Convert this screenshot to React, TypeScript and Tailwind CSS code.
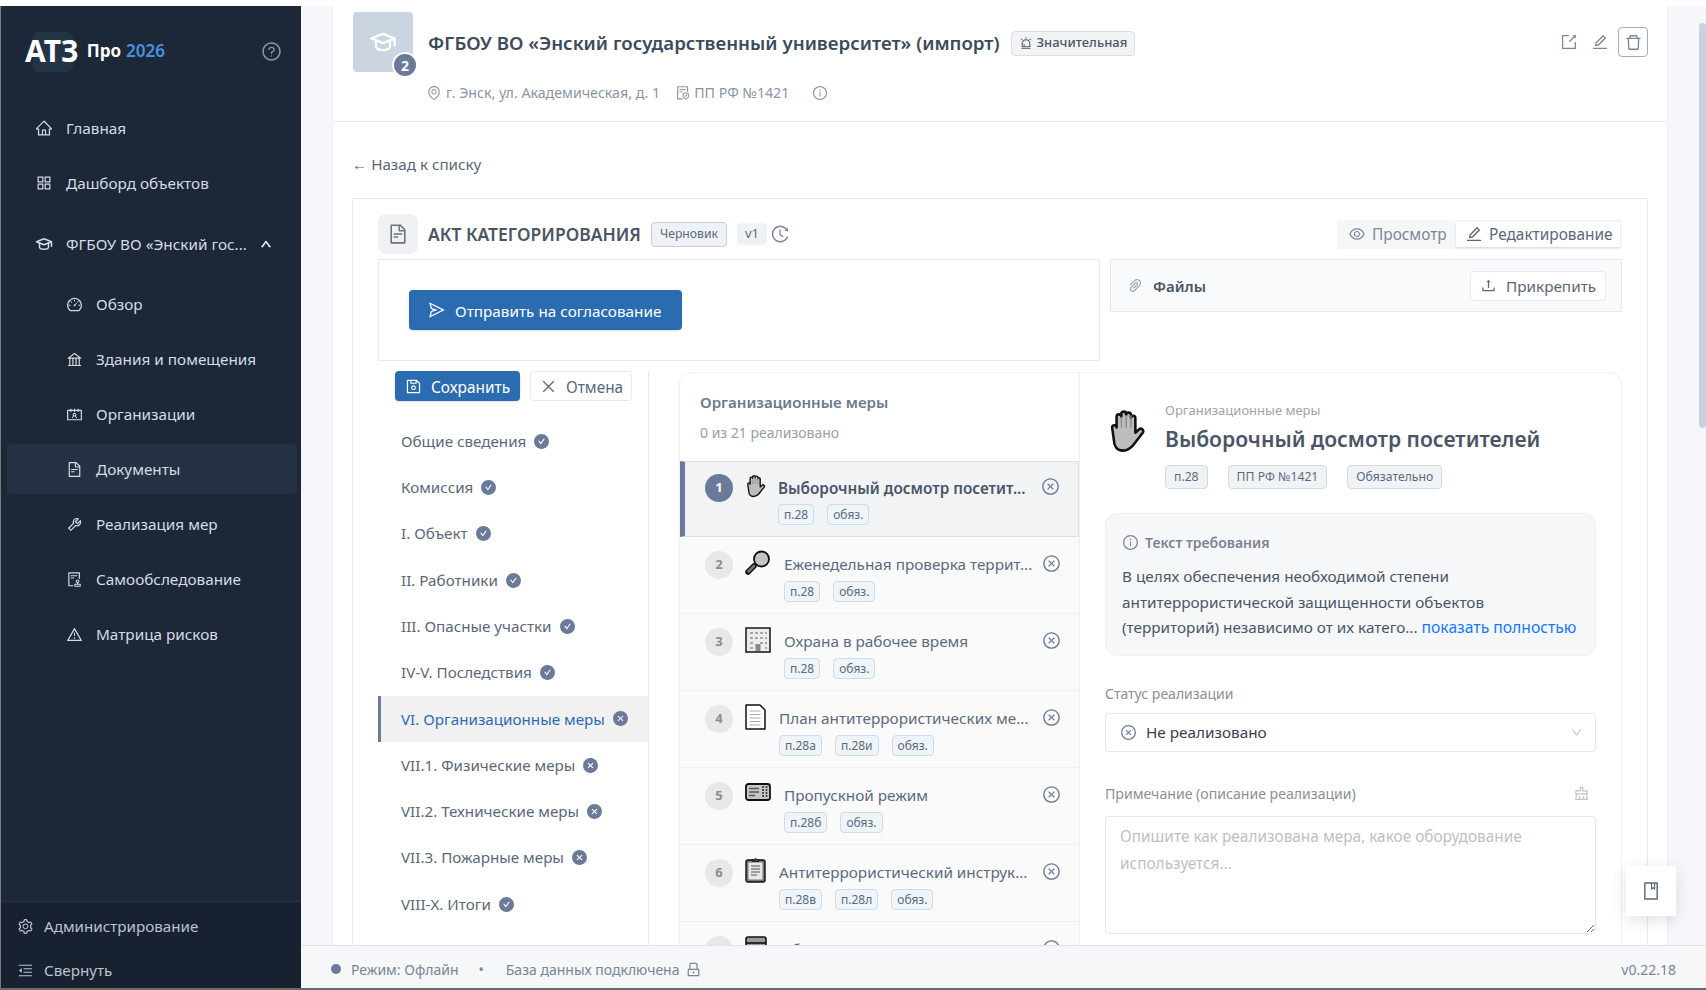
import React from 'react';
import {
  AiOutlineHome, AiOutlineAppstore, AiOutlineDashboard, AiOutlineBank, AiOutlineContacts, AiOutlineFileText,
  AiOutlineTool, AiOutlineAudit, AiOutlineWarning, AiOutlineSetting, AiOutlineMenuFold, AiOutlineQuestionCircle,
  AiOutlineUp, AiOutlineEnvironment, AiOutlineFileProtect, AiOutlineInfoCircle, AiOutlineAlert, AiOutlineExport,
  AiOutlineEdit, AiOutlineDelete, AiOutlineEye, AiOutlineHistory, AiOutlinePaperClip, AiOutlineUpload, AiOutlineSend,
  AiOutlineSave, AiOutlineClose, AiOutlineCloseCircle, AiFillCheckCircle, AiFillCloseCircle, AiOutlineDown,
  AiOutlineClear, AiOutlineBook, AiOutlineLock,
} from 'react-icons/ai';
import { TbSchool } from 'react-icons/tb';

const subNav = [
  { label: 'Обзор', icon: AiOutlineDashboard },
  { label: 'Здания и помещения', icon: AiOutlineBank },
  { label: 'Организации', icon: AiOutlineContacts },
  { label: 'Документы', icon: AiOutlineFileText, active: true },
  { label: 'Реализация мер', icon: AiOutlineTool },
  { label: 'Самообследование', icon: AiOutlineAudit },
  { label: 'Матрица рисков', icon: AiOutlineWarning },
];

const sections = [
  { label: 'Общие сведения', done: true },
  { label: 'Комиссия', done: true },
  { label: 'I. Объект', done: true },
  { label: 'II. Работники', done: true },
  { label: 'III. Опасные участки', done: true },
  { label: 'IV-V. Последствия', done: true },
  { label: 'VI. Организационные меры', done: false, active: true },
  { label: 'VII.1. Физические меры', done: false },
  { label: 'VII.2. Технические меры', done: false },
  { label: 'VII.3. Пожарные меры', done: false },
  { label: 'VIII-X. Итоги', done: true },
];

// emoji in the reference are greyscale, so they are redrawn here
const HandIcon = ({ className }: { className?: string }) => (
  <svg viewBox="0 0 24 26" className={className}>
    <path
      d="M3 11c0-1.8 2.6-1.8 2.6 0V4.6c0-1.8 2.8-1.8 2.8 0V3c0-1.8 2.8-1.8 2.8 0v.6c0-1.8 2.8-1.8 2.8 0v1.6c0-1.6 2.6-1.6 2.6.2V14l2-1.8c1.5-1.4 3.6.5 2.2 2l-5.400 7c-1.500 1.900-3.200 3.300-6 3.300-3.700 0-5.400-2.900-5.400-6.500z"
      fill="#bdbdbd"
      stroke="#111"
      strokeWidth="1.500"
      strokeLinejoin="round"
    />
    <path d="M8.400 4.600V11M11.200 3.600V11M14 3.800V11" stroke="#8a8a8a" strokeWidth="0.800" fill="none" />
  </svg>
);

const LensIcon = ({ className }: { className?: string }) => (
  <svg viewBox="0 0 26 26" className={className}>
    <path d="M9 16L3 22" stroke="#111" strokeWidth="5.500" strokeLinecap="round" />
    <path d="M9 16L3.500 21.500" stroke="#777" strokeWidth="2.500" strokeLinecap="round" />
    <circle cx="16.500" cy="9" r="7.500" fill="#c4c4c4" stroke="#111" strokeWidth="1.800" />
  </svg>
);

const BuildingIcon = ({ className }: { className?: string }) => (
  <svg viewBox="0 0 26 26" className={className}>
    <rect x="1" y="1" width="24" height="24" fill="#ececec" stroke="#222" strokeWidth="1.600" />
    <path d="M5 5h3v2H5zM10 5h3v2h-3zM15 5h3v2h-3zM20 5h2v2h-2zM5 10h3v2H5zM10 10h3v2h-3zM15 10h3v2h-3zM20 10h2v2h-2zM5 15h3v2H5zM15 15h3v2h-3zM20 15h2v2h-2zM5 20h3v2H5zM20 20h2v2h-2z" fill="#a8a8a8" />
    <rect x="10.500" y="17" width="5" height="7" fill="#8a8a8a" />
  </svg>
);

const DocIcon = ({ className }: { className?: string }) => (
  <svg viewBox="0 0 21 26" className={className}>
    <path d="M1 1h14l5 5v19H1z" fill="#fff" stroke="#111" strokeWidth="1.500" strokeLinejoin="round" />
    <path d="M4.500 7h11M4.500 10.500h11M4.500 14h11M4.500 17.500h11M4.500 21h11" stroke="#aaa" strokeWidth="1" />
  </svg>
);

const TicketIcon = ({ className }: { className?: string }) => (
  <svg viewBox="0 0 26 18" className={className}>
    <rect x="1" y="1" width="24" height="16" rx="2.500" fill="#c6c6c6" stroke="#111" strokeWidth="1.800" />
    <path d="M4 5.500h10M4 9h10M4 12.500h6" stroke="#555" strokeWidth="1.400" />
    <path d="M18 3v12M21.500 3v12" stroke="#444" strokeWidth="1.800" strokeDasharray="2 1" />
  </svg>
);

const ClipboardIcon = ({ className }: { className?: string }) => (
  <svg viewBox="0 0 21 26" className={className}>
    <rect x="1" y="3" width="19" height="22" rx="2" fill="#777" stroke="#111" strokeWidth="1.400" />
    <rect x="3.500" y="5.500" width="14" height="17" fill="#e8e8e8" />
    <path d="M6 9h9M6 12h9M6 15h9M6 18h6" stroke="#555" strokeWidth="1" />
    <path d="M7 4.500V2.500h2.500a1 1 0 012 0H14v2z" fill="#444" stroke="#111" strokeWidth="0.800" />
  </svg>
);

const BooksIcon = ({ className }: { className?: string }) => (
  <svg viewBox="0 0 22 26" className={className}>
    <rect x="1" y="1" width="20" height="24" rx="2" fill="#999" stroke="#111" strokeWidth="1.600" />
    <path d="M1 7h20" stroke="#111" strokeWidth="1.600" />
  </svg>
);

const measures = [
  { n: 1, title: 'Выборочный досмотр посетит...', tags: ['п.28', 'обяз.'], icon: HandIcon, iconClass: 'w-[22px] h-[26px] ml-[12px] mt-[-1px]', ml: 'ml-[11px]', h: 'h-[76px]' },
  { n: 2, title: 'Еженедельная проверка террит...', tags: ['п.28', 'обяз.'], icon: LensIcon, iconClass: 'w-[26px] h-[26px] ml-[12px] mt-[-1px]', ml: 'ml-[13px]', h: 'h-[77px]' },
  { n: 3, title: 'Охрана в рабочее время', tags: ['п.28', 'обяз.'], icon: BuildingIcon, iconClass: 'w-[26px] h-[26px] ml-[12px] mt-[-1px]', ml: 'ml-[13px]', h: 'h-[77px]' },
  { n: 4, title: 'План антитеррористических ме...', tags: ['п.28а', 'п.28и', 'обяз.'], icon: DocIcon, iconClass: 'w-[21px] h-[26px] ml-[12px] mt-[-1px]', ml: 'ml-[13px]', h: 'h-[77px]' },
  { n: 5, title: 'Пропускной режим', tags: ['п.28б', 'обяз.'], icon: TicketIcon, iconClass: 'w-[26px] h-[18px] ml-[12px] mt-[1px]', ml: 'ml-[13px]', h: 'h-[77px]' },
  { n: 6, title: 'Антитеррористический инструк...', tags: ['п.28в', 'п.28л', 'обяз.'], icon: ClipboardIcon, iconClass: 'w-[21px] h-[26px] ml-[12px] mt-[-2px]', ml: 'ml-[13px]', h: 'h-[77px]' },
  { n: 7, title: 'Обучение персонала', tags: [], icon: BooksIcon, iconClass: 'w-[22px] h-[26px] ml-[12px]', ml: 'ml-[13px]', h: 'h-[77px]' },
];

const Sidebar: React.FC = () => (
  <aside className="w-[301px] shrink-0 border-l border-[#7a7a7a] flex flex-col bg-[#1c2737] text-[#d6dbe2] text-[15.300px]">
    <div className="h-[90px] mb-[7px] pl-[24px] pr-[19px] flex items-center">
      <div className="relative flex items-center">
        <div className="absolute left-[8px] top-[-4px] w-[40px] h-[40px] rounded-md bg-[#243447]" />
        <span className="relative text-[30px] font-bold text-white leading-none">АТЗ</span>
      </div>
      <span className="ml-[8px] text-[17px] font-bold text-white">Про</span>
      <span className="ml-[5px] text-[17px] font-semibold text-[#4a90e2]">2026</span>
      <AiOutlineQuestionCircle className="ml-auto text-[21px] text-[#8b95a3]" />
    </div>
    <a className="h-[50px] ml-[6px] w-[290px] pl-[28px] flex items-center gap-[13px]">
      <AiOutlineHome className="text-[18px]" />
      <span>Главная</span>
    </a>
    <a className="h-[50px] mt-[5px] ml-[6px] w-[290px] pl-[28px] flex items-center gap-[13px]">
      <AiOutlineAppstore className="text-[18px]" />
      <span>Дашборд объектов</span>
    </a>
    <a className="h-[50px] mt-[11px] ml-[6px] w-[290px] pl-[28px] flex items-center gap-[13px]">
      <TbSchool className="text-[18px]" />
      <span>ФГБОУ ВО «Энский гос...</span>
      <AiOutlineUp className="text-[12px] text-white" strokeWidth={60} />
    </a>
    <div className="mt-[10px] flex flex-col gap-[5px]">
      {subNav.map((item) => {
        const Icon = item.icon;
        return (
          <a
            key={item.label}
            className={`h-[50px] ml-[6px] w-[290px] pl-[59px] flex items-center gap-[13px] rounded ${item.active ? 'bg-[#243244]' : ''}`}
          >
            <Icon className="text-[17px]" />
            <span>{item.label}</span>
          </a>
        );
      })}
    </div>
    <div className="mt-auto border-t border-[#2a3646] bg-[#172130] text-[#bcc3cd] text-[15.200px]">
      <a className="h-[46px] pt-[2px] pl-[16px] flex items-center gap-[10px]">
        <AiOutlineSetting className="text-[17px]" />
        <span>Администрирование</span>
      </a>
      <a className="h-[40px] pt-[4px] pl-[16px] flex items-center gap-[10px]">
        <AiOutlineMenuFold className="text-[17px]" />
        <span>Свернуть</span>
      </a>
    </div>
  </aside>
);

const PageHeader: React.FC = () => (
  <header className="h-[116px] pl-[20px] pr-[19px] pt-[6px] border-b border-[#e6e9ee] flex justify-between">
    <div className="flex">
      <div className="relative w-[60px] h-[60px] rounded bg-[#cbd5e1] flex items-center justify-center">
        <TbSchool className="text-[28px] text-white" />
        <span className="absolute right-[-5px] bottom-[-6px] w-[26px] h-[26px] rounded-full bg-[#6b7a99] border-2 border-white text-white text-[14px] font-bold flex items-center justify-center">
          2
        </span>
      </div>
      <div className="ml-[15px] pt-[16px]">
        <div className="flex items-center h-[30px]">
          <h1 className="text-[18.700px] font-semibold text-[#3d4a5c]">ФГБОУ ВО «Энский государственный университет» (импорт)</h1>
          <span className="ml-[11px] h-[25px] px-[7px] flex items-center gap-[4px] rounded bg-[#f1f3f5] border border-[#d9dee5] text-[13px] font-medium text-[#4a5568]">
            <AiOutlineAlert className="text-[14px]" />
            Значительная
          </span>
        </div>
        <div className="mt-[24px] ml-[-2px] flex items-center text-[14.200px] text-[#8a94a6]">
          <AiOutlineEnvironment className="text-[16px]" />
          <span className="ml-[4px]">г. Энск, ул. Академическая, д. 1</span>
          <AiOutlineFileProtect className="ml-[15px] text-[16px]" />
          <span className="ml-[3px]">ПП РФ №1421</span>
          <AiOutlineInfoCircle className="ml-[23px] text-[16px]" />
        </div>
      </div>
    </div>
    <div className="flex items-center h-[30px] mt-[15px] text-[#7b8798]">
      <AiOutlineExport className="text-[18px] mr-[13px]" />
      <AiOutlineEdit className="text-[18px] mr-[9px]" />
      <button className="w-[30px] h-[30px] border border-[#a3aebd] rounded-sm flex items-center justify-center">
        <AiOutlineDelete className="text-[19px]" />
      </button>
    </div>
  </header>
);

const Tag: React.FC<{ children: React.ReactNode }> = ({ children }) => (
  <span className="h-[21px] px-[5px] flex items-center bg-[#eff4f8] border border-[#cfdbe6] rounded-sm text-[12px] text-[#5a6b7d]">
    {children}
  </span>
);

const MeasureList: React.FC = () => (
  <div className="w-[400px] shrink-0 border-r border-[#eef0f2]">
    <div className="px-[20px] pt-[18px] pb-[18px]">
      <div className="h-[22px] text-[15.100px] font-semibold text-[#6b7a90] leading-[22px]">Организационные меры</div>
      <div className="mt-[10px] h-[20px] text-[14px] text-[#9aa0a8] leading-[20px]">0 из 21 реализовано</div>
    </div>
    {measures.map((m, i) => {
      const Icon = m.icon;
      const selected = i === 0;
      return (
        <div
          key={m.n}
          className={`${m.h} flex ${selected ? 'pt-[12px] bg-[#f1f3f5] border border-[#dcdfe3] border-l-[5px] border-l-[#6b7a99] pl-[20px]' : 'pt-[14px] bg-[#fafafa] border-b border-[#f0f0f0] pl-[25px]'}`}
        >
          <span className={`w-[28px] h-[28px] shrink-0 rounded-full flex items-center justify-center text-[13px] font-bold ${selected ? 'bg-[#6b7a99] text-white' : 'bg-[#e8e8e8] text-[#8c8c8c]'}`}>
            {m.n}
          </span>
          <Icon className={`${m.iconClass} shrink-0`} />
          <div className={`${m.ml} ${selected ? 'pt-[3px]' : 'pt-[2px]'} flex-1 min-w-0`}>
            <div className={`h-[22px] leading-[22px] text-[15.300px] whitespace-nowrap ${selected ? 'font-semibold text-[#4a5568]' : 'text-[#5b6b7f]'}`}>{m.title}</div>
            <div className={`${selected ? 'mt-[5px]' : 'mt-[6px]'} flex gap-[13px]`}>
              {m.tags.map((t) => <Tag key={t}>{t}</Tag>)}
            </div>
          </div>
          <AiOutlineCloseCircle className="text-[19px] text-[#6b7a99] shrink-0 mr-[18px] mt-[3px]" />
        </div>
      );
    })}
  </div>
);

const MeasureDetail: React.FC = () => (
  <div className="flex-1 px-[25px] pt-[28px]">
    <div className="flex pl-[2px]">
      <HandIcon className="w-[41px] h-[48px] mt-[6px] shrink-0" />
      <div className="ml-[17px]">
        <div className="h-[18px] leading-[18px] text-[13px] text-[#9ca3af]">Организационные меры</div>
        <div className="mt-[2px] h-[36px] leading-[36px] text-[21.100px] font-semibold text-[#4a5568] whitespace-nowrap">Выборочный досмотр посетителей</div>
        <div className="mt-[8px] flex gap-[20px] text-[12.200px] text-[#5a6b7d]">
          {['п.28', 'ПП РФ №1421', 'Обязательно'].map((t) => (
            <span key={t} className="h-[24px] px-[8px] flex items-center bg-[#f0f3f6] border border-[#d3dae2] rounded-sm">{t}</span>
          ))}
        </div>
      </div>
    </div>
    <div className="mt-[24px] h-[143px] rounded-xl bg-[#f6f7f9] border border-[#f0f1f3] px-[16px] pt-[18px]">
      <div className="flex items-center gap-[6px] h-[20px] text-[14px] font-semibold text-[#7b8494]">
        <AiOutlineInfoCircle className="text-[17px]" />
        Текст требования
      </div>
      <p className="mt-[12px] text-[15.300px] leading-[25.500px] text-[#4a5568] whitespace-nowrap">
        В целях обеспечения необходимой степени<br />
        антитеррористической защищенности объектов<br />
        (территорий) независимо от их катего... <span className="text-[15.700px] text-[#1677ff]">показать полностью</span>
      </p>
    </div>
    <div className="mt-[28px] h-[20px] leading-[20px] text-[14px] text-[#8a8f98]">Статус реализации</div>
    <div className="mt-[9px] h-[39px] border border-[#e3e6ea] rounded-sm pl-[14px] flex items-center">
      <AiOutlineCloseCircle className="text-[17px] text-[#6b7a99]" />
      <span className="ml-[9px] text-[15.300px] text-[#374151]">Не реализовано</span>
      <AiOutlineDown className="ml-auto mr-[12px] text-[13px] text-[#bfc5cd]" />
    </div>
    <div className="mt-[31px] h-[20px] flex items-center justify-between text-[14.100px] text-[#8a8f98]">
      <span className="pt-[1px]">Примечание (описание реализации)</span>
      <AiOutlineClear className="mr-[6px] text-[17px] text-[#bfc5cd]" />
    </div>
    <textarea
      readOnly
      className="mt-[13px] block w-full h-[118px] border border-[#e3e6ea] rounded-sm px-[14px] py-[6px] text-[15.400px] leading-[27px] placeholder:text-[#bfbfbf]"
      placeholder="Опишите как реализована мера, какое оборудование используется..."
    />
  </div>
);

const ActCard: React.FC = () => (
  <section className="mt-[23px] h-[760px] border border-b-0 border-[#e6e9ee] px-[25px] pt-[15px]">
    <div className="h-[40px] flex items-center">
      <div className="w-[40px] h-[40px] rounded-lg bg-[#f0f1f3] flex items-center justify-center">
        <AiOutlineFileText className="text-[22px] text-[#6b7280]" />
      </div>
      <h2 className="ml-[10px] pt-[1px] text-[17.500px] font-semibold text-[#4b5563]">АКТ КАТЕГОРИРОВАНИЯ</h2>
      <span className="ml-[10px] h-[25px] px-[8px] flex items-center bg-[#eef2f6] border border-[#c5d0dc] rounded-sm text-[12.200px] text-[#5a6b7d]">Черновик</span>
      <span className="ml-[10px] h-[22px] w-[30px] flex items-center justify-center bg-[#eef2f6] rounded-sm text-[13px] text-[#5a6b7d]">v1</span>
      <AiOutlineHistory className="ml-[3px] text-[20px] text-[#7b8798]" />
      <div className="ml-auto mr-[1px] h-[29px] w-[284px] bg-[#f5f6f8] flex items-center pl-[11px] pr-[1px] text-[15.400px]">
        <AiOutlineEye className="text-[18px] text-[#7b8798]" />
        <span className="ml-[6px] pt-[2px] text-[#7b8798]">Просмотр</span>
        <div className="ml-auto h-[25px] w-[164px] bg-white shadow-sm flex items-center pl-[9px] gap-[6px] text-[#5b6778]">
          <AiOutlineEdit className="text-[18px]" />
          <span className="pt-[2px]">Редактирование</span>
        </div>
      </div>
    </div>
    <div className="mt-[5px] flex items-start">
      <div className="w-[722px] h-[102px] border border-[#e6e9ee] pl-[30px] pt-[30px]">
        <button className="w-[273px] h-[40px] bg-[#2b6cb0] rounded-sm shadow-sm text-white text-[15.300px] flex items-center pl-[19px] gap-[9px]">
          <AiOutlineSend className="text-[18px]" />
          <span className="pt-[2px]">Отправить на согласование</span>
        </button>
      </div>
      <div className="ml-[10px] w-[512px] h-[53px] bg-[#f9fafb] border border-[#e6e9ee] flex items-center pl-[16px] pr-[15px]">
        <AiOutlinePaperClip className="text-[17px] text-[#94a3b8]" />
        <span className="ml-[9px] pt-[1px] text-[15px] font-semibold text-[#4b5563]">Файлы</span>
        <button className="ml-auto w-[136px] h-[30px] bg-white border border-[#e6e9ee] rounded-sm text-[15.300px] text-[#5b6778] flex items-center pl-[9px] gap-[9px]">
          <AiOutlineUpload className="text-[17px]" />
          <span className="pt-[1px]">Прикрепить</span>
        </button>
      </div>
    </div>
    <div className="flex">
      <nav className="mt-[10px] w-[271px] shrink-0 border-r border-[#e6e9ee]">
        <div className="pl-[17px] flex gap-[10px]">
          <button className="w-[125px] h-[30px] bg-[#2b6cb0] rounded-sm shadow-sm text-white text-[15.400px] flex items-center pl-[10px] gap-[9px]">
            <AiOutlineSave className="text-[17px]" />
            <span className="pt-[3px]">Сохранить</span>
          </button>
          <button className="w-[102px] h-[30px] bg-white border border-[#e6e9ee] rounded-sm text-[15.400px] text-[#5b6778] flex items-center pl-[9px] gap-[9px]">
            <AiOutlineClose className="text-[17px]" />
            <span className="pt-[3px]">Отмена</span>
          </button>
        </div>
        <div className="mt-[17px]">
          {sections.map((s) => (
            <div
              key={s.label}
              className={`h-[46.300px] flex items-center text-[15.200px] ${s.active ? 'bg-[#f1f1f2] border-l-[3px] border-[#6b7a99] pl-[20px] text-[#2b6cb0]' : 'pl-[23px] text-[#5b6778]'}`}
            >
              <span>{s.label}</span>
              {s.done
                ? <AiFillCheckCircle className="ml-[7px] text-[17px] text-[#6b7a99]" />
                : <AiFillCloseCircle className="ml-[7px] text-[17px] text-[#6b7a99]" />}
            </div>
          ))}
        </div>
      </nav>
      <div className="ml-[30px] mt-[11px] w-[943px] h-[800px] border border-[#f0f1f3] rounded-xl flex overflow-hidden">
        <MeasureList />
        <MeasureDetail />
      </div>
    </div>
  </section>
);

export default function App() {
  return (
    <div className="w-[1706px] h-[990px] overflow-hidden bg-white pt-[6px] font-['Noto_Sans',sans-serif]">
      <div className="h-[982px] flex">
        <Sidebar />
        <main className="relative flex-1 min-w-0 flex flex-col">
          <div className="flex-1 min-h-0 overflow-hidden bg-[#f5f7fa] pl-[31px]">
            <div className="w-[1336px] h-full bg-white border-l border-r border-[#eceff3]">
              <PageHeader />
              <div className="px-[19px] pt-[31px]">
                <a className="block h-[22px] leading-[22px] text-[15.200px] text-[#5a6578]">← Назад к списку</a>
                <ActCard />
              </div>
            </div>
          </div>
          <footer className="h-[43px] shrink-0 bg-[#f5f7f9] border-t border-[#dfe3e8] pl-[30px] pr-[30px] pt-[4px] flex items-center text-[14px] text-[#7a8599]">
            <span className="w-[10px] h-[10px] rounded-full bg-[#6b7a99]" />
            <span className="ml-[10px]">Режим: Офлайн</span>
            <span className="ml-[20px]">•</span>
            <span className="ml-[22px]">База данных подключена</span>
            <AiOutlineLock className="ml-[5px] text-[17px]" />
            <span className="ml-auto">v0.22.18</span>
          </footer>
          <div className="absolute right-0 top-[17px] w-[7px] h-[405px] rounded-sm bg-[#c9d3df]" />
          <button className="absolute right-[30px] top-[860px] w-[50px] h-[50px] bg-white shadow-[0_4px_16px_rgba(0,0,0,0.12)] flex items-center justify-center">
            <AiOutlineBook className="text-[20px] text-[#5b6778]" />
          </button>
        </main>
      </div>
      <div className="h-[2px] bg-[#6a6a6a]" />
    </div>
  );
}
